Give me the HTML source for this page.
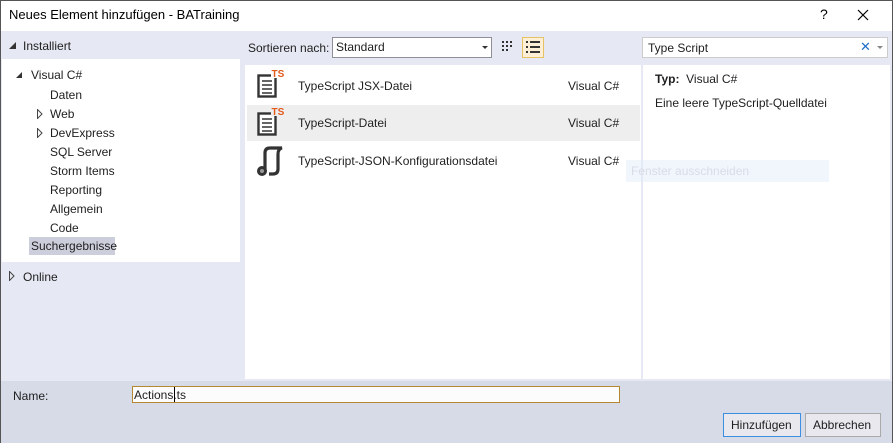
<!DOCTYPE html>
<html><head><meta charset="utf-8"><style>
*{margin:0;padding:0;box-sizing:border-box}
body{width:893px;height:443px;overflow:hidden;background:#e6e9f3;font-family:"Liberation Sans",sans-serif;font-size:12px;color:#1e1e1e;position:relative}
.a{position:absolute}
.frame{left:0;top:0;width:893px;height:443px;border-left:1px solid #555;border-right:1px solid #555;border-top:1px solid #555}
.t{white-space:nowrap}
</style></head><body>
<div class="a" style="left:0;top:0;width:893px;height:31px;background:#fff"></div>
<div class="a t" style="left:9px;top:7px;font-size:13px;color:#000">Neues Element hinzufügen - BATraining</div>
<div class="a t" style="left:820px;top:6px;font-size:14px;color:#000">?</div>
<svg class="a" style="left:857px;top:9px" width="12" height="12"><path d="M1 1L11 11M11 1L1 11" stroke="#000" stroke-width="1.2"/></svg>

<!-- left -->
<div class="a" style="left:9px;top:42px;width:0;height:0;border-left:7px solid transparent;border-bottom:7px solid #333"></div>
<div class="a t" style="left:23px;top:39px">Installiert</div>
<div class="a" style="left:2px;top:59px;width:238px;height:203px;background:#fff"></div>
<div class="a" style="left:16px;top:72px;width:0;height:0;border-left:6px solid transparent;border-bottom:6px solid #333"></div>
<div class="a t" style="left:31px;top:68px">Visual C#</div>
<div class="a t" style="left:50px;top:88px">Daten</div>
<svg class="a" style="left:37px;top:109px" width="6" height="10"><path d="M0.5 0.5L5 5L0.5 9.5Z" fill="none" stroke="#444"/></svg>
<div class="a t" style="left:50px;top:107px">Web</div>
<svg class="a" style="left:37px;top:128px" width="6" height="10"><path d="M0.5 0.5L5 5L0.5 9.5Z" fill="none" stroke="#444"/></svg>
<div class="a t" style="left:50px;top:126px">DevExpress</div>
<div class="a t" style="left:50px;top:145px">SQL Server</div>
<div class="a t" style="left:50px;top:164px">Storm Items</div>
<div class="a t" style="left:50px;top:183px">Reporting</div>
<div class="a t" style="left:50px;top:202px">Allgemein</div>
<div class="a t" style="left:50px;top:221px">Code</div>
<div class="a" style="left:29px;top:237px;width:86px;height:18px;background:#cccedb"></div>
<div class="a t" style="left:31px;top:239px">Suchergebnisse</div>
<svg class="a" style="left:9px;top:271px" width="6" height="10"><path d="M0.5 0.5L5 5L0.5 9.5Z" fill="none" stroke="#444"/></svg>
<div class="a t" style="left:23px;top:270px">Online</div>

<!-- center toolbar -->
<div class="a t" style="left:248px;top:41px">Sortieren nach:</div>
<div class="a" style="left:332px;top:37px;width:160px;height:21px;background:#fff;border:1px solid #8e8f99"></div>
<div class="a t" style="left:336px;top:40px">Standard</div>
<div class="a" style="left:482px;top:46px;border-left:3px solid transparent;border-right:3px solid transparent;border-top:3px solid #333"></div>
<svg class="a" style="left:501px;top:40px" width="14" height="14" fill="#333"><rect x="1" y="1" width="2" height="2"/><rect x="5" y="1" width="2" height="2"/><rect x="9" y="1" width="2" height="2"/><rect x="1" y="5" width="2" height="2"/><rect x="5" y="5" width="2" height="2"/><rect x="9" y="5" width="2" height="2"/><rect x="1" y="9" width="2" height="2"/><rect x="5" y="9" width="2" height="2"/></svg>
<div class="a" style="left:522px;top:37px;width:22px;height:21px;background:#fcefd6;border:1px solid #e5c365"></div>
<svg class="a" style="left:526px;top:41px" width="14" height="13" fill="#333"><rect x="0" y="0" width="2" height="2"/><rect x="4" y="0" width="10" height="2"/><rect x="0" y="5" width="2" height="2"/><rect x="4" y="5" width="10" height="2"/><rect x="0" y="10" width="2" height="2"/><rect x="4" y="10" width="10" height="2"/></svg>

<!-- center list -->
<div class="a" style="left:245px;top:65px;width:396px;height:314px;background:#fff"></div>
<div class="a" style="left:247px;top:105px;width:393px;height:36px;background:#eeeeee"></div>
<svg class="a" style="left:256px;top:68px" width="32" height="32"><rect x="2.5" y="7.5" width="17" height="21" fill="#fff" stroke="#333" stroke-width="2.4"/><path d="M6 13h10M6 17h10M6 21h10M6 25h10" stroke="#333" stroke-width="1.6"/><rect x="15" y="0" width="14" height="10" fill="#fff"/><text x="15.5" y="9" font-size="10" font-weight="bold" fill="#e35a1b" font-family="Liberation Sans">TS</text></svg>
<svg class="a" style="left:256px;top:106px" width="32" height="32"><rect x="2.5" y="7.5" width="17" height="21" fill="#fff" stroke="#333" stroke-width="2.4"/><path d="M6 13h10M6 17h10M6 21h10M6 25h10" stroke="#333" stroke-width="1.6"/><rect x="15" y="0" width="14" height="10" fill="#eee"/><text x="15.5" y="9" font-size="10" font-weight="bold" fill="#e35a1b" font-family="Liberation Sans">TS</text></svg>
<svg class="a" style="left:254px;top:145px" width="32" height="32"><path d="M11 26V8Q11 3 16 3H28Q24 4 24 9V24Q24 29 19 29H15" fill="none" stroke="#333" stroke-width="3.2"/><circle cx="8" cy="26" r="5" fill="#333"/><circle cx="8" cy="26" r="2" fill="#999"/></svg>
<div class="a t" style="left:298px;top:79px">TypeScript JSX-Datei</div>
<div class="a t" style="left:568px;top:79px">Visual C#</div>
<div class="a t" style="left:298px;top:116px">TypeScript-Datei</div>
<div class="a t" style="left:568px;top:116px">Visual C#</div>
<div class="a t" style="left:298px;top:154px">TypeScript-JSON-Konfigurationsdatei</div>
<div class="a t" style="left:568px;top:154px">Visual C#</div>

<!-- right -->
<div class="a" style="left:642px;top:37px;width:246px;height:21px;background:#fff;border:1px solid #ccc"></div>
<div class="a t" style="left:648px;top:41px">Type Script</div>
<div class="a t" style="left:860px;top:39px;color:#1e6fc8;font-size:13px">✕</div>
<div class="a" style="left:877px;top:46px;border-left:3px solid transparent;border-right:3px solid transparent;border-top:3px solid #888"></div>
<div class="a" style="left:643px;top:65px;width:247px;height:314px;background:#fff"></div>
<div class="a" style="left:642px;top:65px;width:1px;height:314px;background:#e6e9f3"></div>
<div class="a t" style="left:655px;top:72px"><b>Typ:</b>&nbsp; Visual C#</div>
<div class="a t" style="left:655px;top:96px">Eine leere TypeScript-Quelldatei</div>
<div class="a" style="left:626px;top:160px;width:203px;height:22px;background:rgba(225,235,248,.45)"></div>
<div class="a t" style="left:631px;top:164px;color:#d6dde6">Fenster ausschneiden</div>

<!-- bottom -->
<div class="a" style="left:0;top:381px;width:893px;height:62px;background:#d6dbe7"></div>
<div class="a t" style="left:13px;top:389px">Name:</div>
<div class="a" style="left:132px;top:386px;width:488px;height:17px;background:#fcfcfc;border:1px solid #b48830"></div>
<div class="a t" style="left:134px;top:388px">Actions.ts</div>
<div class="a" style="left:174px;top:387px;width:1px;height:15px;background:#000"></div>
<div class="a" style="left:723px;top:413px;width:78px;height:24px;background:#e8e8ee;border:1px solid #3c8ee0"></div>
<div class="a t" style="left:731px;top:418px">Hinzufügen</div>
<div class="a" style="left:805px;top:413px;width:76px;height:24px;background:#e8e8ee;border:1px solid #aaa"></div>
<div class="a t" style="left:813px;top:418px">Abbrechen</div>
<div class="a frame"></div>
</body></html>
